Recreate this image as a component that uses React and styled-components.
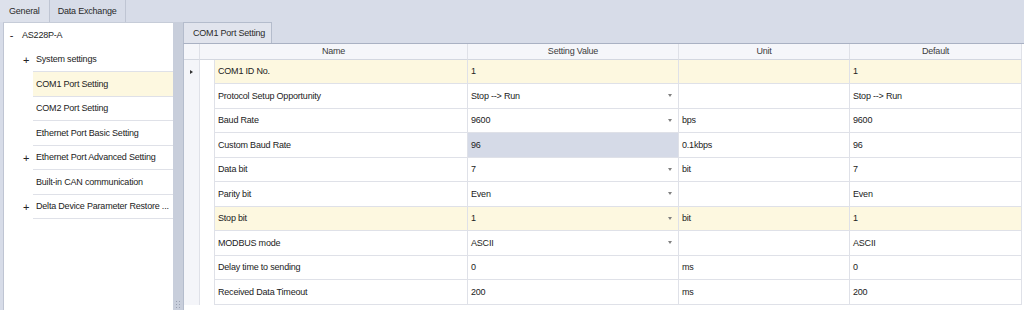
import React from 'react'
import styled, { createGlobalStyle } from 'styled-components'

const GlobalStyle = createGlobalStyle`
  html, body {
    margin: 0;
    padding: 0;
  }
  body {
    font-family: "Liberation Sans", Arial, sans-serif;
    font-size: 9px;
    letter-spacing: -0.2px;
    color: #222;
    background: #d7dce8;
  }
`

const cols = '16px 15px 253px 211px 171px 172px'
const line = '#dfe1e8'

const Window = styled.div`
  width: 1024px;
  height: 310px;
  display: flex;
  flex-direction: column;
  background: #d7dce8;
  overflow: hidden;
`

const TopTabs = styled.div`
  display: flex;
  height: 22px;
  flex-shrink: 0;
`

const TopTab = styled.div`
  display: flex;
  align-items: center;
  box-sizing: border-box;
  padding: 0 ${p => (p.$active ? 9 : 8)}px;
  background: ${p => (p.$active ? '#dde1eb' : '#d7dce8')};
  border-right: 1px solid #bfc5d3;
  color: #2a2a2a;
`

const Body = styled.div`
  display: flex;
  flex: 1;
  min-height: 0;
`

const TreePanel = styled.div`
  width: 170px;
  margin-left: 3px;
  box-sizing: border-box;
  background: #fff;
  border-left: 1px solid #bfc5d3;
  border-top: 1px solid #c6ccd8;
  display: flex;
  flex-direction: column;
`

const TreeRow = styled.div`
  display: flex;
  height: 24.5px;
  padding-left: ${p => p.$indent}px;
`

const Expander = styled.span`
  width: ${p => p.$w}px;
  display: flex;
  align-items: center;
  justify-content: center;
  font-size: 11px;
  color: #222;
`

const TreeLabel = styled.div`
  flex: 1;
  display: flex;
  align-items: center;
  padding-left: 3px;
  box-sizing: border-box;
  white-space: nowrap;
  overflow: hidden;
  background: ${p => (p.$selected ? '#fdf8e0' : 'transparent')};
  border-bottom: 1px solid ${p => (p.$lined ? line : 'transparent')};
`

const Splitter = styled.div`
  width: 10px;
  background: #c8cedb;
  display: flex;
  flex-direction: column;
  justify-content: flex-end;
  align-items: center;
  padding-bottom: 1px;
`

const Main = styled.div`
  flex: 1;
  display: flex;
  flex-direction: column;
  min-width: 0;
`

const PageTabs = styled.div`
  height: 21px;
  display: flex;
  align-items: flex-end;
  flex-shrink: 0;
`

const PageTab = styled.div`
  width: 89px;
  height: 21px;
  box-sizing: border-box;
  padding-left: 9px;
  display: flex;
  align-items: center;
  background: #e1e4ed;
  border: 1px solid #b4bccc;
  border-bottom: none;
  color: #2a2a2a;
`

const Grid = styled.div`
  flex: 1;
  background: #fff;
  border-top: 1px solid #a9b1c3;
  border-left: 1px solid #b4bccc;
`

const Row = styled.div`
  display: grid;
  grid-template-columns: ${cols};
  height: ${p => (p.$header ? 15.5 : 24.5)}px;
`

const HeadCell = styled.div`
  grid-column: span ${p => p.$span || 1};
  display: flex;
  align-items: center;
  justify-content: center;
  box-sizing: border-box;
  background: #f5f6fa;
  border-right: 1px solid ${line};
  border-bottom: 1px solid #d3d7e0;
  color: #3c3c3c;
`

const Indicator = styled.div`
  background: #f4f5f9;
  border-right: 1px solid ${line};
  display: flex;
  align-items: center;
  justify-content: center;
`

const Pointer = styled.span`
  width: 0;
  height: 0;
  border-top: 2.5px solid transparent;
  border-bottom: 2.5px solid transparent;
  border-left: 3px solid #333;
`

const Gap = styled.div`
  background: #fff;
  border-right: 1px solid ${line};
`

const Cell = styled.div`
  display: flex;
  align-items: center;
  justify-content: space-between;
  box-sizing: border-box;
  padding: 0 6px 0 3px;
  background: ${p => p.$bg};
  border-right: 1px solid ${line};
  border-bottom: 1px solid ${line};
  white-space: nowrap;
  overflow: hidden;
`

const DropArrow = styled.span`
  width: 0;
  height: 0;
  border-left: 2.5px solid transparent;
  border-right: 2.5px solid transparent;
  border-top: 3px solid #808080;
`

const Grip = () => (
  <svg width="5" height="8" viewBox="0 0 5 8">
    {[0, 3, 6].map(y => (
      <g key={y} fill="#9aa1b1">
        <rect x="0" y={y} width="1" height="1" />
        <rect x="3" y={y} width="1" height="1" />
      </g>
    ))}
  </svg>
)

const tree = [
  { label: 'COM1 Port Setting', selected: true },
  { label: 'COM2 Port Setting' },
  { label: 'Ethernet Port Basic Setting' },
  { label: 'Ethernet Port Advanced Setting', plus: true },
  { label: 'Built-in CAN communication' },
  { label: 'Delta Device Parameter Restore ...', plus: true },
]

const settings = [
  { name: 'COM1 ID No.', value: '1', unit: '', def: '1', hl: true, current: true },
  { name: 'Protocol Setup Opportunity', value: 'Stop --> Run', unit: '', def: 'Stop --> Run', drop: true },
  { name: 'Baud Rate', value: '9600', unit: 'bps', def: '9600', drop: true },
  { name: 'Custom Baud Rate', value: '96', unit: '0.1kbps', def: '96', focused: true },
  { name: 'Data bit', value: '7', unit: 'bit', def: '7', drop: true },
  { name: 'Parity bit', value: 'Even', unit: '', def: 'Even', drop: true },
  { name: 'Stop bit', value: '1', unit: 'bit', def: '1', drop: true, hl: true },
  { name: 'MODBUS mode', value: 'ASCII', unit: '', def: 'ASCII', drop: true },
  { name: 'Delay time to sending', value: '0', unit: 'ms', def: '0' },
  { name: 'Received Data Timeout', value: '200', unit: 'ms', def: '200' },
]

const App = () => {
  return (
    <Window>
      <GlobalStyle />
      <TopTabs>
        <TopTab $active>General</TopTab>
        <TopTab>Data Exchange</TopTab>
      </TopTabs>
      <Body>
        <TreePanel>
          <TreeRow $indent={0}>
            <Expander $w={15}>-</Expander>
            <TreeLabel>AS228P-A</TreeLabel>
          </TreeRow>
          <TreeRow $indent={15}>
            <Expander $w={14}>+</Expander>
            <TreeLabel $lined>System settings</TreeLabel>
          </TreeRow>
          {tree.map(item => (
            <TreeRow key={item.label} $indent={15}>
              <Expander $w={14}>{item.plus ? '+' : ''}</Expander>
              <TreeLabel $lined $selected={item.selected}>
                {item.label}
              </TreeLabel>
            </TreeRow>
          ))}
        </TreePanel>
        <Splitter>
          <Grip />
        </Splitter>
        <Main>
          <PageTabs>
            <PageTab>COM1 Port Setting</PageTab>
          </PageTabs>
          <Grid>
            <Row $header>
              <HeadCell />
              <HeadCell $span={2}>Name</HeadCell>
              <HeadCell>Setting Value</HeadCell>
              <HeadCell>Unit</HeadCell>
              <HeadCell>Default</HeadCell>
            </Row>
            {settings.map(s => {
              const bg = s.hl ? '#fdf8e0' : '#fff'
              return (
                <Row key={s.name}>
                  <Indicator>{s.current && <Pointer />}</Indicator>
                  <Gap />
                  <Cell $bg={bg}>{s.name}</Cell>
                  <Cell $bg={s.focused ? '#d5dae7' : bg}>
                    <span>{s.value}</span>
                    {s.drop && <DropArrow />}
                  </Cell>
                  <Cell $bg={bg}>{s.unit}</Cell>
                  <Cell $bg={bg}>{s.def}</Cell>
                </Row>
              )
            })}
          </Grid>
        </Main>
      </Body>
    </Window>
  )
}

export default App
